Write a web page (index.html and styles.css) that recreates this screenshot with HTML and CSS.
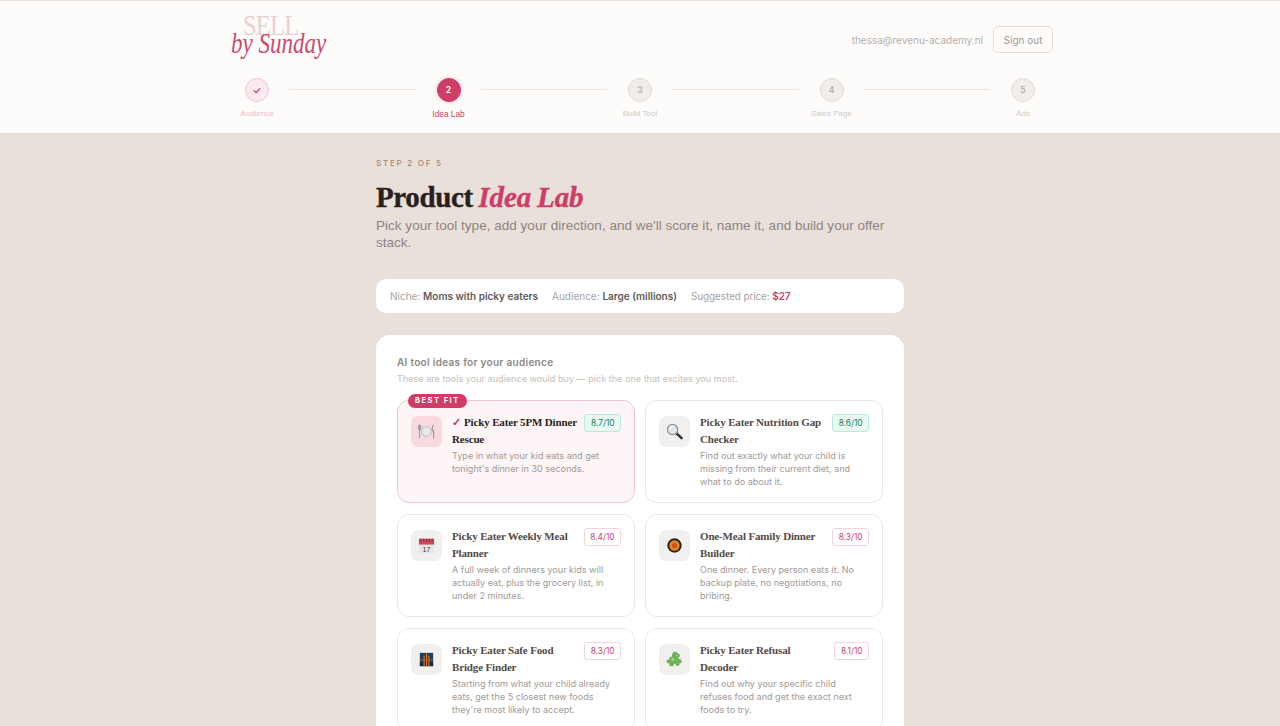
FILE: index.html
```html
<!DOCTYPE html>
<html lang="en">
<head>
  <meta charset="UTF-8" />
  <meta name="viewport" content="width=device-width, initial-scale=1.0"/>
  <title>Product Idea Lab - Sell by Sunday</title>
  <link rel="stylesheet" href="styles.css">
</head>
<body>
  <header class="topbar">
    <div class="topbar-inner">
      <div class="topbar-row">
        <div class="logo">
          <span class="logo-sell">SELL</span>
          <span class="logo-sunday">by Sunday</span>
        </div>
        <div class="account">
          <span class="account-email">thessa@revenu-academy.nl</span>
          <button class="signout">Sign out</button>
        </div>
      </div>

      <nav class="stepper">
        <div class="step done"><div class="step-dot">✓</div><div class="step-label">Audience</div></div>
        <div class="step-line"></div>
        <div class="step current"><div class="step-dot">2</div><div class="step-label">Idea Lab</div></div>
        <div class="step-line"></div>
        <div class="step"><div class="step-dot">3</div><div class="step-label">Build Tool</div></div>
        <div class="step-line"></div>
        <div class="step"><div class="step-dot">4</div><div class="step-label">Sales Page</div></div>
        <div class="step-line"></div>
        <div class="step"><div class="step-dot">5</div><div class="step-label">Ads</div></div>
      </nav>
    </div>
  </header>

  <main class="container">
    <p class="eyebrow">STEP 2 OF 5</p>
    <h1 class="page-title">Product <em>Idea Lab</em></h1>
    <p class="page-sub">Pick your tool type, add your direction, and we'll score it, name it, and build your offer stack.</p>

    <section class="summary">
      <span>Niche: <b>Moms with picky eaters</b></span>
      <span>Audience: <b>Large (millions)</b></span>
      <span class="summary-price">Suggested price: <b class="price">$27</b></span>
    </section>

    <section class="panel">
      <h2 class="panel-title">AI tool ideas for your audience</h2>
      <p class="panel-sub">These are tools your audience would buy — pick the one that excites you most.</p>

      <div class="idea-grid">
        <article class="idea selected">
          <span class="best-fit">BEST FIT</span>
          <div class="idea-icon">
            <svg viewBox="0 0 20 20" width="19" height="19">
              <circle cx="10" cy="10" r="5.6" fill="#dededf" stroke="#c4c4c8" stroke-width="1"/>
              <circle cx="10" cy="10" r="3.4" fill="#ebebed"/>
              <path d="M1.500 3v5M2.700 3v14M3.900 3v5M1.500 8h2.400" stroke="#8f8d90" stroke-width="0.9" fill="none"/>
              <path d="M17.500 3c-1.200 1-1.600 3-1.400 6l1.400.6V17" stroke="#8f8d90" stroke-width="1.100" fill="none"/>
            </svg>
          </div>
          <div class="idea-body">
            <div class="idea-head">
              <h3 class="idea-title"><span class="tick">✓</span>Picky Eater 5PM Dinner Rescue</h3>
              <span class="score high">8.7/10</span>
            </div>
            <p class="idea-desc">Type in what your kid eats and get tonight's dinner in 30 seconds.</p>
          </div>
        </article>

        <article class="idea">
          <div class="idea-icon">
            <svg viewBox="0 0 20 20" width="19" height="19">
              <path d="M11.500 11.500l6 5.500" stroke="#2e2e30" stroke-width="2.600" stroke-linecap="round"/>
              <circle cx="8" cy="8" r="5.400" fill="#dfe6ec" stroke="#8d9298" stroke-width="1.300"/>
              <path d="M5 7.500c.4-1.600 1.400-2.400 3-2.600" stroke="#fff" stroke-width="1" fill="none"/>
            </svg>
          </div>
          <div class="idea-body">
            <div class="idea-head">
              <h3 class="idea-title">Picky Eater Nutrition Gap Checker</h3>
              <span class="score high">8.6/10</span>
            </div>
            <p class="idea-desc">Find out exactly what your child is missing from their current diet, and what to do about it.</p>
          </div>
        </article>

        <article class="idea">
          <div class="idea-icon">
            <svg viewBox="0 0 20 20" width="19" height="19">
              <rect x="2" y="3" width="16" height="15" fill="#e6e6e8"/>
              <rect x="2" y="3" width="16" height="6" fill="#c4475a"/>
              <path d="M4 2.500v3M7 2.500v3M10 2.500v3M13 2.500v3M16 2.500v3" stroke="#7a2f3c" stroke-width="0.8"/>
              <text x="10" y="17" class="cal-day" text-anchor="middle">17</text>
            </svg>
          </div>
          <div class="idea-body">
            <div class="idea-head">
              <h3 class="idea-title">Picky Eater Weekly Meal Planner</h3>
              <span class="score">8.4/10</span>
            </div>
            <p class="idea-desc">A full week of dinners your kids will actually eat, plus the grocery list, in under 2 minutes.</p>
          </div>
        </article>

        <article class="idea">
          <div class="idea-icon">
            <svg viewBox="0 0 20 20" width="19" height="19">
              <circle cx="10" cy="10" r="7.600" fill="#2d211c"/>
              <circle cx="10" cy="10" r="5.400" fill="#dd8a22"/>
              <circle cx="10" cy="10" r="2.800" fill="#c8551d"/>
            </svg>
          </div>
          <div class="idea-body">
            <div class="idea-head">
              <h3 class="idea-title">One-Meal Family Dinner Builder</h3>
              <span class="score">8.3/10</span>
            </div>
            <p class="idea-desc">One dinner. Every person eats it. No backup plate, no negotiations, no bribing.</p>
          </div>
        </article>

        <article class="idea">
          <div class="idea-icon">
            <svg viewBox="0 0 20 20" width="19" height="19">
              <rect x="3" y="3" width="14" height="14" fill="#1f3f5c"/>
              <rect x="3" y="13" width="14" height="4" fill="#16283a"/>
              <path d="M10 3.500v13.500M7.500 6v11M12.500 6v11" stroke="#d67a2c" stroke-width="1.200"/>
              <path d="M3 10.500h14" stroke="#b35a25" stroke-width="1"/>
            </svg>
          </div>
          <div class="idea-body">
            <div class="idea-head">
              <h3 class="idea-title">Picky Eater Safe Food Bridge Finder</h3>
              <span class="score">8.3/10</span>
            </div>
            <p class="idea-desc">Starting from what your child already eats, get the 5 closest new foods they're most likely to accept.</p>
          </div>
        </article>

        <article class="idea">
          <div class="idea-icon">
            <svg viewBox="0 0 20 20" width="19" height="19">
              <path d="M9 2.500h3.500v2.200c1-.8 2.800-.3 2.800 1.100s-1.200 1.700-1.600 1.500V10h2.800c-.5 1.200.2 2 1 2-.2 1.400-1.700 2-2.800 1.200V16h-3c.5-1.300-.5-2.300-1.600-2.100-1.200.1-1.800 1.100-1.400 2.600H5.200v-3c-1.300.6-3 .1-3.200-1.300-.2-1.600 1.700-2.500 3.200-1.700V7.500h3c-.7-1.600-.2-4 .8-5z" fill="#6cb552" stroke="#4c8f3a" stroke-width="0.6"/>
              <circle cx="8" cy="10" r="1.500" fill="#a5d88e"/>
              <circle cx="12.500" cy="6" r="1" fill="#a5d88e"/>
            </svg>
          </div>
          <div class="idea-body">
            <div class="idea-head">
              <h3 class="idea-title">Picky Eater Refusal Decoder</h3>
              <span class="score">8.1/10</span>
            </div>
            <p class="idea-desc">Find out why your specific child refuses food and get the exact next foods to try.</p>
          </div>
        </article>
      </div>
    </section>
  </main>
</body>
</html>
```

FILE: styles.css
```css
html, body {
  height: 100%;
}

body {
  margin: 0;
  overflow: hidden;
  background-color: #e9e0da;
  font-family: 'Inter', 'Noto Sans', sans-serif;
  color: #2a1f1d;
}

/* header */
.topbar {
  background-color: #fefcfb;
  border-top: 1px solid #ebe4df;
  padding: 0 0 13px;
  border-bottom: 1px solid #e6dcd6;
}

.topbar-inner {
  width: 828px;
  margin: 0 auto;
}

.topbar-row {
  display: flex;
  justify-content: space-between;
  align-items: center;
  height: 63px;
  padding: 7px 1px 0 0;
  margin-bottom: 7px;
}

.logo {
  position: relative;
  width: 100px;
  height: 63px;
}

.logo-sell {
  position: absolute;
  left: 17px;
  top: -1px;
  font-family: 'Liberation Serif', serif;
  font-size: 30px;
  line-height: 36px;
  letter-spacing: -1px;
  color: #eccfd2;
  transform: scaleX(0.82);
  transform-origin: left;
}

.logo-sunday {
  position: absolute;
  left: 5px;
  top: 21px;
  font-family: 'Liberation Serif', serif;
  font-style: italic;
  font-size: 23px;
  line-height: 34px;
  white-space: nowrap;
  color: #cb4a6e;
  transform: scaleY(1.3);
  transform-origin: 0 25px;
}

.account {
  display: flex;
  align-items: center;
  gap: 10px;
}

.account-email {
  font-size: 10px;
  color: #b3aeaa;
}

.signout {
  height: 27px;
  width: 60px;
  padding: 0;
  background-color: #fefcfb;
  border: 1px solid #e4deda;
  border-radius: 5px;
  font-family: inherit;
  font-size: 10px;
  color: #a09a96;
}

/* stepper */
.stepper {
  display: flex;
  align-items: flex-start;
}

.step {
  width: 62px;
  flex-shrink: 0;
  display: flex;
  flex-direction: column;
  align-items: center;
}

.step-dot {
  width: 24px;
  height: 24px;
  box-sizing: border-box;
  display: flex;
  align-items: center;
  justify-content: center;
  border-radius: 50%;
  background-color: #f0edeb;
  border: 1px solid #e0dbd7;
  font-size: 8.5px;
  font-weight: 600;
  color: #b5b0ac;
}

.step-label {
  margin-top: 6px;
  font-family: 'Liberation Sans', sans-serif;
  font-size: 8px;
  line-height: 12px;
  white-space: nowrap;
  color: #cdc8c4;
}

.step.done .step-dot {
  background-color: #fbe9ee;
  border-color: #f3c4d2;
  color: #c9406a;
  font-size: 10px;
}

.step.done .step-label {
  color: #f0b7c8;
}

.step.current .step-dot {
  background-color: #cf3d66;
  border-color: #cf3d66;
  color: white;
  box-shadow: 0 0 5px rgba(207, 61, 102, 0.25);
}

.step.current .step-label {
  color: #cf3d66;
  font-size: 8.3px;
}

.step-line {
  flex: 1;
  height: 1px;
  margin: 11px 2px 0 1px;
  background-color: #ebe6e2;
}

/* page */
.container {
  width: 528px;
  margin: 0 auto;
  padding-top: 23px;
}

.eyebrow {
  margin: 0;
  font-size: 8px;
  line-height: 12px;
  font-weight: 500;
  letter-spacing: 0.22em;
  color: #a98570;
}

.page-title {
  margin: 10px 0 0;
  font-family: 'Liberation Serif', serif;
  font-size: 29px;
  line-height: 36px;
  font-weight: bold;
  letter-spacing: -0.35px;
  word-spacing: -1.5px;
  -webkit-text-stroke: 0.4px currentColor;
  color: #2a1f1d;
}

.page-title em {
  color: #cf3d66;
  letter-spacing: -0.05px;
}

.page-sub {
  margin: 2px 0 0;
  font-family: 'Liberation Sans', sans-serif;
  font-size: 13.55px;
  line-height: 17px;
  color: #8f8481;
}

.summary {
  display: flex;
  gap: 14px;
  align-items: center;
  box-sizing: border-box;
  height: 34px;
  margin-top: 28px;
  padding: 0 14px;
  background-color: white;
  border-radius: 10px;
  font-size: 10px;
  color: #a8a3a0;
}

.summary-price {
  letter-spacing: -0.12px;
}

.summary b {
  font-weight: 600;
  color: #625a57;
}

.summary b.price {
  color: #cf3d66;
}

.panel {
  margin-top: 22px;
  padding: 21px 21px 40px;
  background-color: white;
  border-radius: 14px;
}

.panel-title {
  margin: 0;
  font-size: 10px;
  line-height: 12px;
  font-weight: 600;
  letter-spacing: 0.03em;
  color: #8d8885;
}

.panel-sub {
  margin: 4px 0 0;
  font-size: 9.1px;
  line-height: 13px;
  color: #c5c0bc;
}

.idea-grid {
  display: grid;
  grid-template-columns: 238px 238px;
  gap: 11px 10px;
  margin-top: 15px;
}

.idea {
  position: relative;
  display: flex;
  gap: 10px;
  box-sizing: border-box;
  padding: 15px 13px 14px;
  border: 1px solid #ece8e5;
  border-radius: 12px;
  background-color: white;
}

.idea.selected {
  background-color: #fdf5f6;
  border-color: #f1c6d3;
}

.best-fit {
  position: absolute;
  left: 10px;
  top: -7px;
  height: 14px;
  padding: 0 7px;
  border-radius: 7px;
  background-color: #cf3d66;
  font-size: 7.5px;
  line-height: 14px;
  font-weight: 700;
  letter-spacing: 0.2em;
  color: white;
}

.idea-icon {
  width: 31px;
  height: 31px;
  flex-shrink: 0;
  display: flex;
  align-items: center;
  justify-content: center;
  border-radius: 7px;
  background-color: #f2f0ef;
}

.idea.selected .idea-icon {
  background-color: #f9d9e0;
}

.cal-day {
  font-family: 'Liberation Sans', sans-serif;
  font-size: 7.5px;
  fill: #444;
}

.idea-body {
  flex: 1;
  min-width: 0;
}

.idea-head {
  display: flex;
  justify-content: space-between;
  align-items: flex-start;
  gap: 4px;
  margin-top: -2px;
}

.idea-title {
  margin: 0;
  font-family: 'Liberation Serif', serif;
  font-size: 11px;
  line-height: 17px;
  font-weight: bold;
  letter-spacing: -0.15px;
  color: #544a47;
}

.idea.selected .idea-title {
  color: #2a1f1d;
}

.tick {
  display: inline-block;
  width: 12px;
  color: #cf3d66;
}

.score {
  flex-shrink: 0;
  box-sizing: border-box;
  height: 18px;
  padding: 0 5.5px;
  border: 1px solid #f5d3dc;
  border-radius: 3px;
  background-color: white;
  font-size: 8.3px;
  line-height: 16px;
  color: #c9406a;
}

.score.high {
  background-color: #e9f9f2;
  border-color: #b8ecd8;
  color: #1a7a5a;
}

.idea-desc {
  margin: 1px 0 0;
  font-size: 9.05px;
  line-height: 13px;
  color: #a09a97;
}
```
